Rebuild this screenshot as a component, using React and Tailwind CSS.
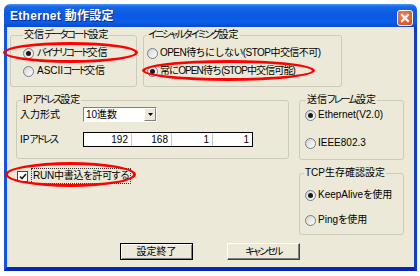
import React from 'react';

// katakana in the original UI font is much narrower than in Noto, so tighten it
const K = ({ children }) => <span className="tracking-[-1.8px]">{children}</span>;

const Radio = ({ checked }) => (
  <span className="w-[11px] h-[11px] rounded-full border border-[#6f7f8f] bg-[linear-gradient(135deg,#d4d4cc,#ffffff)] flex items-center justify-center shrink-0">
    {checked && <span className="w-[5px] h-[5px] rounded-full bg-[#1a1a1a]" />}
  </span>
);

const RadioRow = ({ checked, label, className = '' }) => (
  <div className={`flex items-center gap-[2px] h-[14px] ${className}`}>
    <Radio checked={checked} />
    <span className="whitespace-nowrap leading-[14px]">{label}</span>
  </div>
);

const GroupBox = ({ label, labelLeft = 'left-[5px]', className = '', children }) => (
  <div className={`relative border border-[#cbcbbb] rounded-[3px] shrink-0 ${className}`}>
    <span className={`absolute -top-[7px] ${labelLeft} px-[1px] bg-[#ece9d8] leading-[12px] whitespace-nowrap`}>{label}</span>
    {children}
  </div>
);

const IpCell = ({ value, width, last }) => (
  <div className={`${width} h-full flex items-center justify-end pr-[3px] ${last ? '' : 'border-r border-[#c8c8c8]'}`}>
    {value}
  </div>
);

export default function App() {
  return (
    <div className="w-[420px] h-[276px] bg-white pt-[4px] pl-[4px] text-[10px] text-black font-['Liberation_Sans','Noto_Sans_CJK_JP',sans-serif] [font-feature-settings:'palt']">
      <div className="relative w-[413px] h-[267px] flex flex-col">
        {/* title bar */}
        <div className="h-[23px] shrink-0 rounded-t-[6px] bg-[linear-gradient(to_bottom,#4a93f7_0%,#1767e8_12%,#0b5ae2_45%,#0a5de8_80%,#0849cc_100%)] flex items-center pl-[6px] pr-[4px]">
          <span className="text-white font-bold text-[12px] tracking-[0.3px] [text-shadow:1px_1px_0_#0a2a8a]">Ethernet 動作設定</span>
          <div className="ml-auto mt-[4px] w-[16px] h-[16px] rounded-[3px] border border-white bg-[radial-gradient(circle_at_40%_35%,#f08a5a,#d8431e)] flex items-center justify-center">
            <svg width="10" height="10" viewBox="0 0 10 10">
              <path d="M2 2 L8 8 M8 2 L2 8" stroke="white" strokeWidth="2" strokeLinecap="square" />
            </svg>
          </div>
        </div>

        {/* body */}
        <div className="flex-1 bg-[#ece9d8] border-l-[3px] border-r-[3px] border-b-[4px] border-l-[#0d55ea] border-r-[#0a3ed0] border-b-[#0326b8] flex flex-col">
          {/* row 1 */}
          <div className="flex mt-[8px] ml-[3px] gap-[6px]">
            <GroupBox label={<>交信<K>データコード</K>設定</>} labelLeft="left-[12px]" className="w-[127px] h-[52px] pt-[10px] pl-[12px] flex flex-col gap-[4px]">
              <RadioRow checked label={<><K>バイナリコード</K>交信</>} className="gap-[3px]" />
              <RadioRow label={<>ASCII<K>コード</K>交信</>} className="gap-[3px]" />
            </GroupBox>
            <GroupBox label={<><K>イニシャルタイミング</K>設定</>} labelLeft="left-[3px]" className="w-[199px] h-[52px] pt-[10px] pl-[3px] flex flex-col gap-[4px]">
              <RadioRow label={<span className="[font-feature-settings:normal] tracking-[-0.55px]">OPEN待ちにしない(STOP中交信不可)</span>} />
              <RadioRow checked label={<span className="[font-feature-settings:normal] tracking-[-0.9px]">常にOPEN待ち(STOP中交信可能)</span>} />
            </GroupBox>
          </div>

          {/* rows 2-3 */}
          <div className="flex mt-[13px]">
            <div className="ml-[9px] flex flex-col">
              <GroupBox label={<>IP<K>アドレス</K>設定</>} labelLeft="left-[5px]" className="w-[273px] h-[59px] pt-[6px] pl-[3px] flex flex-col gap-[10px]">
                <div className="flex items-center h-[15px]">
                  <span className="w-[63px]">入力形式</span>
                  <div className="w-[74px] h-[15px] bg-white border border-t-[#808080] border-l-[#808080] border-b-white border-r-white flex items-center">
                    <span className="flex-1 pl-[2px] leading-[13px]">10進数</span>
                    <span className="w-[12px] h-[13px] bg-[#ece9d8] border border-t-white border-l-white border-b-[#808080] border-r-[#808080] flex items-center justify-center">
                      <svg width="5" height="3" viewBox="0 0 5 3"><path d="M0 0H5L2.5 3Z" fill="#000" /></svg>
                    </span>
                  </div>
                </div>
                <div className="flex items-center h-[15px]">
                  <span className="w-[63px]">IP<K>アドレス</K></span>
                  <div className="w-[170px] h-[15px] bg-white border border-black flex">
                    <IpCell value="192" width="w-[48px]" />
                    <IpCell value="168" width="w-[40px]" />
                    <IpCell value="1" width="w-[41px]" />
                    <IpCell value="1" width="flex-1" last />
                  </div>
                </div>
              </GroupBox>
              <div className="flex items-center mt-[9px] ml-[1px] h-[16px]">
                <span className="w-[11px] h-[11px] border border-[#1c5180] bg-white flex items-center justify-center">
                  <svg width="8" height="7" viewBox="0 0 8 7"><path d="M1 3.5 L3 5.5 L7 1" stroke="#1a1a1a" strokeWidth="1.6" fill="none" /></svg>
                </span>
                <span className="ml-[3px] px-[1px] h-[16px] leading-[14px] border border-dotted border-[#333] whitespace-nowrap tracking-[-0.25px]">RUN中書込を許可する</span>
              </div>
            </div>

            <div className="ml-[10px] flex flex-col">
              <GroupBox label={<>送信<K>フレーム</K>設定</>} labelLeft="left-[6px]" className="w-[105px] h-[60px] pt-[7px] pl-[5px] flex flex-col gap-[14px]">
                <RadioRow checked label="Ethernet(V2.0)" />
                <RadioRow label="IEEE802.3" />
              </GroupBox>
              <GroupBox label="TCP生存確認設定" labelLeft="left-[4px]" className="w-[105px] h-[62px] mt-[13px] pt-[14px] pl-[5px] flex flex-col gap-[11px]">
                <RadioRow checked label="KeepAliveを使用" />
                <RadioRow label="Pingを使用" />
              </GroupBox>
            </div>
          </div>

          {/* buttons */}
          <div className="flex ml-[113px] mt-[8px] gap-[34px]">
            <button className="w-[73px] h-[17px] border border-black bg-[#ece9d8] shadow-[inset_1px_1px_0_#fff,inset_-1px_-1px_0_#808080] text-[10px] leading-[15px]">設定終了</button>
            <button className="w-[73px] h-[17px] border border-t-white border-l-white border-b-[#404040] border-r-[#404040] bg-[#ece9d8] shadow-[inset_-1px_-1px_0_#808080] text-[10px] leading-[15px]"><K>キャンセル</K></button>
          </div>
        </div>

        {/* red annotation ellipses */}
        <div className="absolute left-[-1px] top-[38px] w-[135px] h-[21px] rounded-[50%] border-[3px] border-[#f00]" />
        <div className="absolute left-[138px] top-[56px] w-[173px] h-[21px] rounded-[50%] border-[3px] border-[#f00]" />
        <div className="absolute left-[1px] top-[158px] w-[131px] h-[25px] rounded-[50%] border-[3px] border-[#f00]" />
      </div>
    </div>
  );
}
